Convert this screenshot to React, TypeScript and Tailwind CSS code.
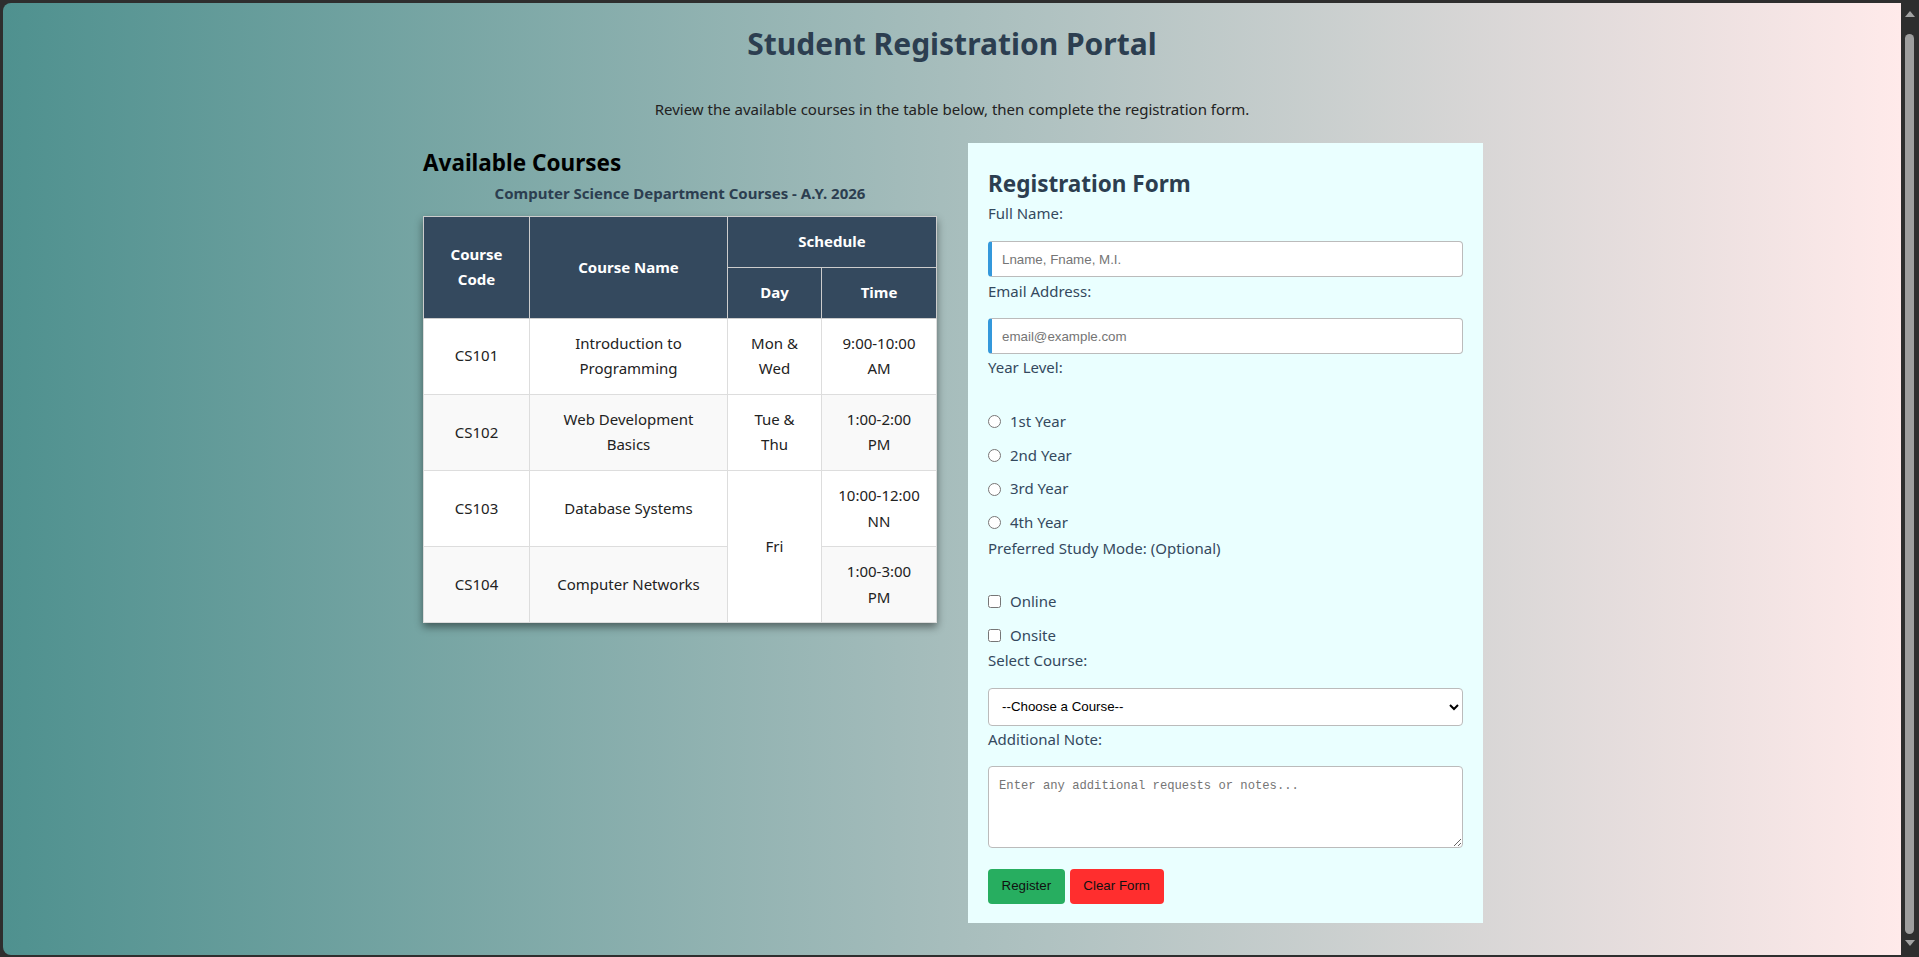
import React from 'react';

const sans = "font-['Noto_Sans',sans-serif]";
const arial = "font-['Liberation_Sans',Arial,sans-serif]";

type Row = {
  code: string;
  name: React.ReactNode;
  day?: React.ReactNode;
  dayRowSpan?: number;
  time: React.ReactNode;
  shaded: boolean;
};

const rows: Row[] = [
  {
    code: 'CS101',
    name: <>Introduction to<br />Programming</>,
    day: <>Mon &amp;<br />Wed</>,
    time: <>9:00-10:00<br />AM</>,
    shaded: false,
  },
  {
    code: 'CS102',
    name: <>Web Development<br />Basics</>,
    day: <>Tue &amp;<br />Thu</>,
    time: <>1:00-2:00<br />PM</>,
    shaded: true,
  },
  {
    code: 'CS103',
    name: 'Database Systems',
    day: 'Fri',
    dayRowSpan: 2,
    time: <>10:00-12:00<br />NN</>,
    shaded: false,
  },
  {
    code: 'CS104',
    name: 'Computer Networks',
    time: <>1:00-3:00<br />PM</>,
    shaded: true,
  },
];

const th = 'border border-[#cccccc] bg-[#34495e] px-[12px] py-[12px] text-center align-middle font-bold text-white';
const td = 'border border-[#dddddd] px-[12px] py-[12px] text-center align-middle text-[#222]';

function CoursesTable() {
  return (
    <div className="flex flex-col">
      <h2 className="mt-[6.6px] text-[22.5px] font-bold leading-[28.8px] text-black">Available Courses</h2>
      <p className="mt-[2.8px] text-center text-[15px] font-bold leading-[25.6px] text-[#2c3e50]">
        Computer Science Department Courses - A.Y. 2026
      </p>
      <table className="mt-[10px] w-full table-fixed border-collapse border border-[#cccccc] text-[15px] leading-[25.6px] shadow-[0_4px_8px_rgba(0,0,0,0.45)]">
        <colgroup>
          <col className="w-[106px]" />
          <col className="w-[198px]" />
          <col className="w-[94px]" />
          <col />
        </colgroup>
        <thead>
          <tr>
            <th rowSpan={2} className={th}>Course<br />Code</th>
            <th rowSpan={2} className={th}>Course Name</th>
            <th colSpan={2} className={th}>Schedule</th>
          </tr>
          <tr>
            <th className={th}>Day</th>
            <th className={th}>Time</th>
          </tr>
        </thead>
        <tbody>
          {rows.map((r) => (
            <tr key={r.code} className={r.shaded ? 'bg-[#f9f9f9]' : 'bg-white'}>
              <td className={td}>{r.code}</td>
              <td className={td}>{r.name}</td>
              {r.day !== undefined && (
                <td rowSpan={r.dayRowSpan} className={`${td} bg-white`}>{r.day}</td>
              )}
              <td className={td}>{r.time}</td>
            </tr>
          ))}
        </tbody>
      </table>
    </div>
  );
}

const label = 'block text-[15px] leading-[25.6px] text-[#34495e]';
const option = 'flex h-[25.6px] items-center text-[15px] leading-[25.6px] text-[#34495e]';
const textInput = `block h-[36px] w-full rounded-[4px] border border-[#bbbbbb] border-l-4 border-l-[#3498db] bg-white px-[10px] ${arial} text-[13.33px] text-black outline-none placeholder:text-[#757575]`;

function RegistrationForm() {
  return (
    <form className="flex flex-col bg-[#eaffff] px-[20px] pt-[21px] pb-[19px]" onSubmit={(e) => e.preventDefault()}>
      <h2 className="mt-[6px] text-[22.5px] font-bold leading-[28.8px] text-[#2c3e50]">Registration Form</h2>

      <label className={`${label} mt-[3px]`}>Full Name:</label>
      <input type="text" placeholder="Lname, Fname, M.I." className={`${textInput} mt-[14.5px]`} />

      <label className={`${label} mt-[2px]`}>Email Address:</label>
      <input type="email" placeholder="email@example.com" className={`${textInput} mt-[13px]`} />

      <label className={`${label} mt-[1px]`}>Year Level:</label>
      <div className="mt-[28.5px] flex flex-col gap-[8px]">
        {['1st Year', '2nd Year', '3rd Year', '4th Year'].map((y) => (
          <label key={y} className={option}>
            <input type="radio" name="year" className="m-0 mr-[9px] h-[13px] w-[13px]" />
            {y}
          </label>
        ))}
      </div>

      <label className={label}>Preferred Study Mode: (Optional)</label>
      <div className="mt-[28px] flex flex-col gap-[8px]">
        {['Online', 'Onsite'].map((m) => (
          <label key={m} className={option}>
            <input type="checkbox" className="m-0 mr-[9px] h-[13px] w-[13px]" />
            {m}
          </label>
        ))}
      </div>

      <label className={label}>Select Course:</label>
      <select
        defaultValue=""
        className={`mt-[14px] block h-[38px] w-full rounded-[4px] border border-[#bbbbbb] bg-white pl-[9px] pr-[4px] ${arial} text-[13.33px] text-black outline-none`}
      >
        <option value="">--Choose a Course--</option>
        <option value="CS101">CS101 - Introduction to Programming</option>
        <option value="CS102">CS102 - Web Development Basics</option>
        <option value="CS103">CS103 - Database Systems</option>
        <option value="CS104">CS104 - Computer Networks</option>
      </select>

      <label className={`${label} mt-[1px]`}>Additional Note:</label>
      <textarea
        placeholder="Enter any additional requests or notes..."
        className="mt-[13px] block h-[82px] w-full resize-y rounded-[4px] border border-[#bbbbbb] bg-white p-[10px] font-['Liberation_Mono',monospace] text-[12.2px] text-black outline-none placeholder:text-[#757575]"
      />

      <div className="mt-[21px] flex gap-[5px]">
        <button type="submit" className={`h-[35px] rounded-[4px] bg-[#27ae60] px-[13.5px] ${arial} text-[13.33px] text-[#111]`}>
          Register
        </button>
        <button type="reset" className={`h-[35px] rounded-[4px] bg-[#ff2e2e] px-[13.7px] ${arial} text-[13.33px] text-[#111]`}>
          Clear Form
        </button>
      </div>
    </form>
  );
}

function Scrollbar() {
  return (
    <div className="flex w-[18px] flex-col items-center bg-[#2e2e2e] pr-[1px]">
      <div className="flex h-[34px] items-start justify-center pt-[11px]">
        <svg width="10" height="6" viewBox="0 0 10 6"><path d="M5 0 L10 6 L0 6 Z" fill="#a3a3a3" /></svg>
      </div>
      <div className="w-[9px] flex-1 rounded-full bg-[#9e9e9e]" />
      <div className="flex h-[23px] items-start justify-center pt-[6px]">
        <svg width="10" height="6" viewBox="0 0 10 6"><path d="M0 0 L10 0 L5 6 Z" fill="#a3a3a3" /></svg>
      </div>
    </div>
  );
}

export default function App() {
  return (
    <div className={`flex h-screen w-full overflow-hidden bg-[#2e2e2e] ${sans}`}>
      <div className="mt-[3px] mb-[2px] ml-[3px] flex-1 overflow-hidden rounded-l-[8px] bg-[linear-gradient(to_right,#4f918f,#ffeaea)]">
        <div className="flex flex-col items-center pt-[22px]">
          <h1 className="text-[30px] font-bold leading-[38.4px] text-[#2c3e50]">Student Registration Portal</h1>
          <p className="mt-[34px] text-[15px] leading-[25.6px] text-[#222]">
            Review the available courses in the table below, then complete the registration form.
          </p>
          <div className="mt-[19.6px] ml-[2px] grid w-[1060px] grid-cols-[514px_515px] items-start gap-[31px]">
            <CoursesTable />
            <RegistrationForm />
          </div>
        </div>
      </div>
      <Scrollbar />
    </div>
  );
}
